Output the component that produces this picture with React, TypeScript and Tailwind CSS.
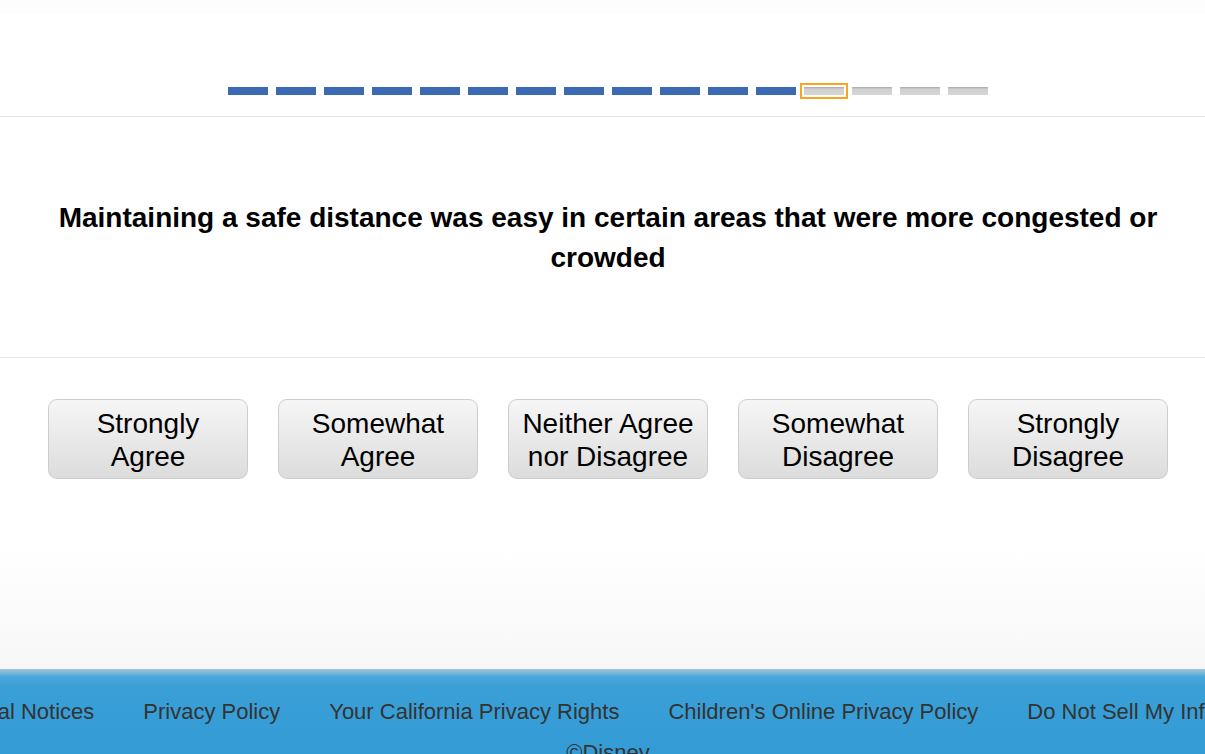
const TOTAL = 16;
const CURRENT = 12;

const ANSWERS = [
  ["Strongly", "Agree"],
  ["Somewhat", "Agree"],
  ["Neither Agree", "nor Disagree"],
  ["Somewhat", "Disagree"],
  ["Strongly", "Disagree"],
];

const FOOTER_LINKS = [
  "Legal Notices",
  "Privacy Policy",
  "Your California Privacy Rights",
  "Children's Online Privacy Policy",
  "Do Not Sell My Information",
];

function Progress() {
  return (
    <div className="flex gap-2">
      {Array.from({ length: TOTAL }).map((_, i) => {
        if (i < CURRENT) {
          return <div key={i} className="w-10 h-2 bg-[#3d6bb3]" />;
        }
        return (
          <div
            key={i}
            className={
              i === CURRENT
                ? "w-10 h-2 bg-[linear-gradient(to_bottom,#a9a9a9_0px,#cfcfcf_2px,#d6d6d6_100%)] outline-2 outline-offset-2 outline-[#f5a623]"
                : "w-10 h-2 bg-[linear-gradient(to_bottom,#a9a9a9_0px,#cfcfcf_2px,#d6d6d6_100%)]"
            }
          />
        );
      })}
    </div>
  );
}

export default function App() {
  return (
    <div className="w-[1205px] h-[754px] overflow-hidden bg-white font-['Liberation_Sans',Arial,sans-serif]">
      <div className="w-[1216px]">
        <div className="h-[117px] border-b border-[#e6e6e6] flex items-end justify-center pb-[21px] bg-[linear-gradient(to_bottom,#fdfdfd_0px,#fdfdfd_13px,#ffffff_14px)]">
          <Progress />
        </div>

        <div className="h-[241px] border-b border-[#e6e6e6] flex items-center justify-center px-[50px] pt-[2px]">
          <h1 className="text-[28px] leading-[40px] font-bold text-black text-center">
            Maintaining a safe distance was easy in certain areas that were
            more congested or crowded
          </h1>
        </div>

        <div className="h-[311px] pt-[41px] bg-[linear-gradient(to_bottom,#ffffff_0px,#ffffff_190px,#f7f7f7_100%)]">
          <div className="flex justify-center gap-[30px]">
            {ANSWERS.map((a) => (
              <button
                key={a.join(" ")}
                className="w-[200px] h-20 rounded-[9px] border border-[#cdcdcd] bg-[linear-gradient(to_bottom,#f6f6f6,#dcdcdc)] flex flex-col items-center justify-center pt-[2px] text-[28px] leading-[33px] text-black"
              >
                <span>{a[0]}</span>
                <span>{a[1]}</span>
              </button>
            ))}
          </div>
        </div>

        <footer className="h-[90px] bg-[linear-gradient(to_bottom,#a3c6dc_0px,#48a6d9_8px,#3a9fd7_18px,#339bd5_100%)] text-[#333333]">
          <div className="flex gap-[49px] whitespace-nowrap pt-[30px] ml-[-39px] text-[22px] leading-[25px]">
            {FOOTER_LINKS.map((l) => (
              <span key={l} className="shrink-0">
                {l}
              </span>
            ))}
          </div>
          <div className="text-center text-[22px] leading-[25px] mt-[16px]">
            ©Disney
          </div>
        </footer>
      </div>
    </div>
  );
}
